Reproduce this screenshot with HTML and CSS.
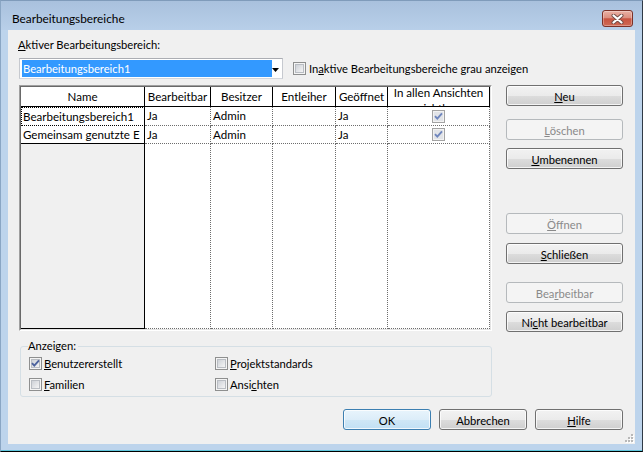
FILE: index.html
```html
<!DOCTYPE html>
<html lang="de">
<head>
<meta charset="utf-8">
<title>Bearbeitungsbereiche</title>
<link rel="stylesheet" href="styles.css">
</head>
<body>
<svg class="defs" width="0" height="0" aria-hidden="true">
  <defs>
    <linearGradient id="cbg" x1="0" y1="0" x2="1" y2="1">
      <stop offset="0" stop-color="#cbcfd5"/>
      <stop offset="1" stop-color="#f7f7f7"/>
    </linearGradient>
    <symbol id="cb-off" viewBox="0 0 13 13">
      <rect x=".5" y=".5" width="12" height="12" fill="#f4f4f4" stroke="#8e8f8f"/>
      <rect x="2.5" y="2.5" width="8" height="8" fill="url(#cbg)" stroke="#b9bdc3"/>
    </symbol>
    <symbol id="cb-on" viewBox="0 0 13 13">
      <rect x=".5" y=".5" width="12" height="12" fill="#f4f4f4" stroke="#8e8f8f"/>
      <rect x="2.5" y="2.5" width="8" height="8" fill="url(#cbg)" stroke="#b9bdc3"/>
      <path d="M3 6.2 5.3 8.7 10 3.4" fill="none" stroke="#4d639e" stroke-width="1.9"/>
    </symbol>
    <symbol id="cb-dis" viewBox="0 0 13 13">
      <rect x=".5" y=".5" width="12" height="12" fill="#f2f2f2" stroke="#a3a3a3"/>
      <rect x="2" y="2" width="9" height="9" fill="#e2e4e8"/>
      <path d="M3 6.2 5.3 8.7 10 3.4" fill="none" stroke="#6f86bd" stroke-width="1.9"/>
    </symbol>
  </defs>
</svg>

<div class="window">
  <div class="titlebar">
    <span class="title">Bearbeitungsbereiche</span>
    <div class="close">
      <svg width="13" height="10" viewBox="0 0 13 10">
        <path d="M2.5 1.5 10.5 8.5M10.5 1.5 2.5 8.5" stroke="#6e4a45" stroke-width="4" stroke-linecap="round"/>
        <path d="M2.5 1.5 10.5 8.5M10.5 1.5 2.5 8.5" stroke="#fff" stroke-width="2.2" stroke-linecap="round"/>
      </svg>
    </div>
  </div>

  <div class="client">
    <div class="label"><u>A</u>ktiver Bearbeitungsbereich:</div>

    <div class="combo-row">
      <div class="combo">
        <span class="sel">Bearbeitungsbereich1</span>
        <svg class="arrow" width="7" height="4" viewBox="0 0 7 4"><path d="M0 0h7L3.5 4z" fill="#000"/></svg>
      </div>
      <div class="cb top-cb">
        <svg width="13" height="13"><use href="#cb-off"/></svg>
        <span>In<u>a</u>ktive Bearbeitungsbereiche grau anzeigen</span>
      </div>
    </div>

    <div class="main">
      <div class="gridframe">
        <div class="gridinner">
          <div class="hc">Name</div>
          <div class="hc">Bearbeitbar</div>
          <div class="hc">Besitzer</div>
          <div class="hc">Entleiher</div>
          <div class="hc">Geöffnet</div>
          <div class="hc wrap"><span>In allen Ansichten sichtbar</span></div>

          <div class="nc focus">Bearbeitungsbereich1</div>
          <div class="dc">Ja</div>
          <div class="dc">Admin</div>
          <div class="dc"></div>
          <div class="dc">Ja</div>
          <div class="dc ck"><svg width="13" height="13"><use href="#cb-dis"/></svg></div>

          <div class="nc last">Gemeinsam genutzte E</div>
          <div class="dc r2">Ja</div>
          <div class="dc r2">Admin</div>
          <div class="dc r2"></div>
          <div class="dc r2">Ja</div>
          <div class="dc r2 ck"><svg width="13" height="13"><use href="#cb-dis"/></svg></div>

          <div class="nf"></div>
          <div class="df"></div>
          <div class="df"></div>
          <div class="df"></div>
          <div class="df"></div>
          <div class="df"></div>
        </div>
      </div>

      <div class="btncol">
        <div class="btn"><span><u>N</u>eu</span></div>
        <div class="btn dis g13"><span><u>L</u>öschen</span></div>
        <div class="btn g8"><span><u>U</u>mbenennen</span></div>
        <div class="btn dis g44"><span><u>Ö</u>ffnen</span></div>
        <div class="btn g9"><span><u>S</u>chließen</span></div>
        <div class="btn dis g18"><span>Bea<u>r</u>beitbar</span></div>
        <div class="btn g8"><span>Ni<u>c</u>ht bearbeitbar</span></div>
      </div>
    </div>

    <fieldset class="group">
      <legend>Anzeigen:</legend>
      <div class="opts">
        <div class="cb"><svg width="13" height="13"><use href="#cb-on"/></svg><span><u>B</u>enutzererstellt</span></div>
        <div class="cb"><svg width="13" height="13"><use href="#cb-off"/></svg><span><u>P</u>rojektstandards</span></div>
        <div class="cb"><svg width="13" height="13"><use href="#cb-off"/></svg><span><u>F</u>amilien</span></div>
        <div class="cb"><svg width="13" height="13"><use href="#cb-off"/></svg><span>Ansi<u>c</u>hten</span></div>
      </div>
    </fieldset>

    <div class="footer">
      <div class="btn def"><span>OK</span></div>
      <div class="btn"><span>Abbrechen</span></div>
      <div class="btn"><span><u>H</u>ilfe</span></div>
    </div>

    <svg class="grip" width="10" height="10" viewBox="0 0 10 10">
      <g fill="#fff"><rect x="8" y="2" width="2" height="2"/><rect x="5" y="5" width="2" height="2"/><rect x="8" y="5" width="2" height="2"/><rect x="2" y="8" width="2" height="2"/><rect x="5" y="8" width="2" height="2"/><rect x="8" y="8" width="2" height="2"/></g>
      <g fill="#b8b8b8"><rect x="7" y="1" width="2" height="2"/><rect x="4" y="4" width="2" height="2"/><rect x="7" y="4" width="2" height="2"/><rect x="1" y="7" width="2" height="2"/><rect x="4" y="7" width="2" height="2"/><rect x="7" y="7" width="2" height="2"/></g>
    </svg>
  </div>
</div>
</body>
</html>
```

FILE: styles.css
```css
* { box-sizing: border-box; }
html, body { margin: 0; padding: 0; }
body {
  width: 643px;
  height: 452px;
  overflow: hidden;
  background: #000;
  font-family: "Lato", "Liberation Sans", sans-serif;
  font-size: 11.2px;
  color: #000;
}
u { text-decoration: underline; text-decoration-thickness: 1px; text-underline-offset: 1px; }

.defs { position: absolute; width: 0; height: 0; overflow: hidden; }

.window {
  width: 643px;
  height: 452px;
  border: 1px solid;
  border-color: #7f9bba #303a46 #000 #8aa6c4;
  background: #bdd4ec;
  box-shadow: inset 0 -1px 0 #5fc6dc;
  display: flex;
  flex-direction: column;
}

.titlebar {
  height: 29px;
  flex: none;
  display: flex;
  align-items: flex-start;
  padding: 9px 9px 0 11px;
  background: linear-gradient(#a9c1dd, #b8cfe9);
}
.title {
  font-size: 11.8px;
  line-height: 16px;
  color: #000;
  margin-top: 1px;
}
.close {
  margin-left: auto;
  width: 31px;
  height: 17px;
  border: 1px solid #7b3128;
  border-radius: 3px;
  background: linear-gradient(#eab1a5 0%, #dc8f80 45%, #c85441 52%, #cf6a55 100%);
  box-shadow: inset 0 0 0 1px rgba(255, 255, 255, 0.3);
  display: flex;
  align-items: center;
  justify-content: center;
}

.client {
  position: relative;
  margin: 0 7px;
  height: 414px;
  flex: none;
  background: #f0f0f0;
  padding: 0 12px 0 11px;
  display: flex;
  flex-direction: column;
}

.label {
  margin: 8px 0 0 -1px;
  line-height: 14px;
}

.combo-row {
  margin-top: 6px;
  display: flex;
  align-items: center;
  height: 21px;
}
.combo {
  width: 264px;
  height: 21px;
  border: 1px solid;
  border-color: #abadb3 #c6c9cf #d3d6dc #c6c9cf;
  background: #fff;
  display: flex;
  align-items: flex-start;
}
.sel {
  width: 250px;
  height: 17px;
  margin: 1px 0 0 2px;
  padding-left: 1px;
  background: #3399ff;
  color: #fff;
  line-height: 17px;
  white-space: nowrap;
}
.arrow { margin-top: 9px; flex: none; }

.cb {
  display: flex;
  align-items: center;
  white-space: nowrap;
}
.cb svg { flex: none; }
.cb span { margin-left: 2px; line-height: 14px; }
.top-cb { margin-left: 10px; }
.top-cb span { margin-left: 3px; }

.main {
  margin-top: 6px;
  display: flex;
  align-items: flex-start;
}
.gridframe {
  width: 473px;
  height: 246px;
  border: 1px solid;
  border-color: #a0a0a0 #fff #fff #a0a0a0;
}
.gridinner {
  height: 100%;
  border: 1px solid;
  border-color: #696969 #e3e3e3 #e3e3e3 #696969;
  background: #fff;
  display: grid;
  grid-template-columns: 124px 66px 62px 63px 52px 102px;
  grid-template-rows: 20px 19px 18px 1fr;
  font-size: 11.55px;
}
.hc {
  border-right: 1px solid #000;
  border-bottom: 1px solid #000;
  background: #fff;
  text-align: center;
  line-height: 19px;
  white-space: nowrap;
  overflow: hidden;
}
.hc.wrap {
  white-space: normal;
  line-height: 16px;
}
.hc.wrap span {
  display: block;
  margin-top: -2px;
}
.nc {
  border-right: 1px solid #000;
  padding-left: 2px;
  white-space: nowrap;
  overflow: hidden;
  background: #fff;
}
.nc.focus {
  border: 1px dotted #000;
  border-right: 1px solid #000;
  padding-left: 1px;
  line-height: 17px;
}
.nc.last {
  border-bottom: 1px solid #000;
  line-height: 17px;
}
.dc {
  border-right: 1px dotted #6d6d6d;
  border-bottom: 1px dotted #6d6d6d;
  padding-left: 2px;
  line-height: 18px;
  white-space: nowrap;
  overflow: hidden;
}
.dc.r2 { line-height: 17px; }
.dc.ck {
  display: flex;
  align-items: center;
  justify-content: center;
  padding-left: 0;
}
.nf {
  background: #f0f0f0;
  border-right: 1px solid #000;
  border-bottom: 1px solid #000;
}
.df {
  border-right: 1px dotted #6d6d6d;
  border-bottom: 1px dotted #6d6d6d;
}

.btncol {
  margin-left: 14px;
  width: 117px;
  display: flex;
  flex-direction: column;
}
.btn {
  height: 21px;
  border: 1px solid #707070;
  border-radius: 3px;
  background: linear-gradient(#f2f2f2 0%, #ebebeb 50%, #dddddd 51%, #cfcfcf 100%);
  box-shadow: inset 0 0 0 1px rgba(255, 255, 255, 0.75);
  display: flex;
  align-items: center;
  justify-content: center;
  line-height: 14px;
  white-space: nowrap;
  flex: none;
}
.btn span { position: relative; top: 1px; }
.btn.dis {
  border-color: #b5b9bc;
  background: #f4f4f4;
  box-shadow: none;
  color: #8a8a8a;
}
.btn.def {
  border-color: #3c7fb1;
  background: linear-gradient(#e8f4fc 0%, #dcedf9 50%, #cfe7f6 51%, #c1e0f4 100%);
}
.g13 { margin-top: 13px; }
.g8 { margin-top: 8px; }
.g44 { margin-top: 44px; }
.g9 { margin-top: 9px; }
.g18 { margin-top: 18px; }

.group {
  margin: 7px 0 0 1px;
  width: 472px;
  padding: 0 7px 1px;
  border: 1px solid #d5dfe5;
  border-radius: 3px;
  min-width: 0;
}
.group legend {
  padding: 0 2px 0 0;
  line-height: 14px;
}
.opts {
  display: grid;
  grid-template-columns: 186px 1fr;
  grid-auto-rows: 21px;
  padding-left: 1px;
}

.footer {
  margin-top: 12px;
  display: flex;
  justify-content: flex-end;
  gap: 8px;
}
.footer .btn { width: 88px; }

.grip {
  position: absolute;
  right: 1px;
  bottom: 1px;
}
```
